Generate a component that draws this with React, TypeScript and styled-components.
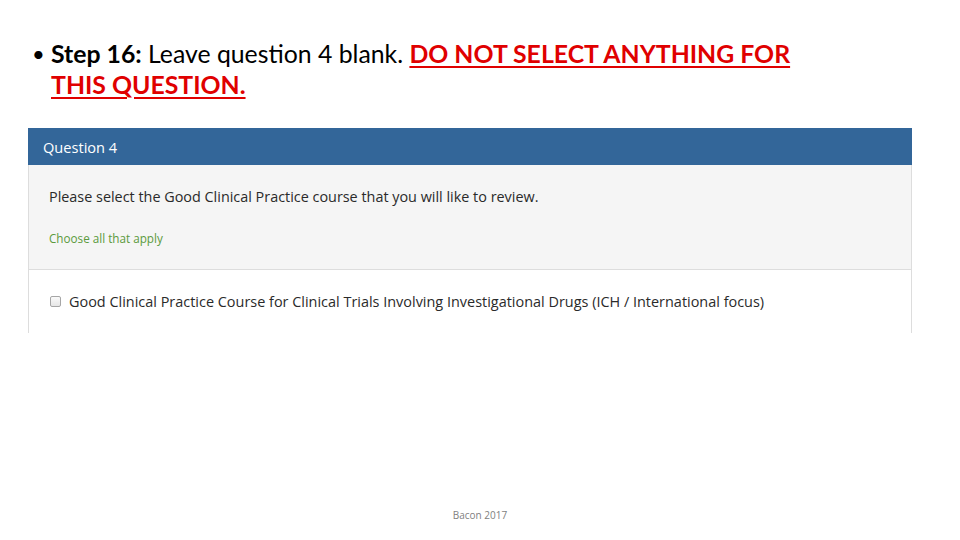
import React from "react";
import styled, { createGlobalStyle } from "styled-components";

const Global = createGlobalStyle`
  html, body { margin: 0; padding: 0; background: #ffffff; }
  body { width: 960px; height: 540px; overflow: hidden; }
`;

const Slide = styled.div`
  position: relative;
  width: 960px;
  height: 540px;
  background: #fff;
  display: flex;
  flex-direction: column;
`;

const Bullet = styled.div`
  display: flex;
  padding: 38px 0 0 32px;
  font-family: Lato, "Open Sans", sans-serif;
  font-size: 24.8px;
  line-height: 31px;
  color: #000;
`;

const Dot = styled.span`
  width: 19px;
  flex: none;
  font-size: 22px;
`;

const BulletText = styled.div`
  width: 840px;
`;

const Strong = styled.b`
  font-weight: 700;
`;

const Warn = styled.span`
  color: #e00000;
  font-weight: 700;
  text-decoration: underline;
  text-decoration-thickness: 2px;
  text-underline-offset: 3px;
`;

const Panel = styled.div`
  margin: 28px 0 0 28px;
  width: 884px;
  font-family: "Open Sans", sans-serif;
`;

const PanelHeader = styled.div`
  height: 37px;
  background: #336699;
  color: #fff;
  font-size: 14.6px;
  display: flex;
  align-items: center;
  padding-left: 15px;
`;

const PanelBody = styled.div`
  background: #f5f5f5;
  border-left: 1px solid #dddddd;
  border-right: 1px solid #dddddd;
  border-bottom: 1px solid #dddddd;
  height: 105px;
  padding: 22px 0 0 20px;
  box-sizing: border-box;
`;

const Prompt = styled.div`
  font-size: 14.4px;
  color: #2a2a2a;
  line-height: 20px;
`;

const Hint = styled.div`
  margin-top: 23px;
  font-size: 11.7px;
  color: #5b9a3c;
  line-height: 16px;
`;

const OptionRow = styled.div`
  height: 63px;
  border-left: 1px solid #dddddd;
  border-right: 1px solid #dddddd;
  display: flex;
  align-items: center;
  padding-left: 21px;
  box-sizing: border-box;
  gap: 8px;
  font-size: 14.45px;
  color: #2a2a2a;
`;

const Box = styled.span`
  width: 11px;
  height: 11px;
  border: 1px solid #a6a6a6;
  border-radius: 2px;
  background: linear-gradient(#fafafa, #e6e6e6);
  box-sizing: border-box;
  flex: none;
  margin-top: -1px;
`;

const Footer = styled.div`
  position: absolute;
  left: 0;
  right: 0;
  top: 508px;
  text-align: center;
  font-family: "Open Sans", sans-serif;
  font-size: 10px;
  color: #7f7f7f;
`;

export default function App() {
  return (
    <Slide>
      <Global />
      <Bullet>
        <Dot>•</Dot>
        <BulletText>
          <Strong>Step 16:</Strong> Leave question 4 blank.{" "}
          <Warn>
            DO NOT SELECT ANYTHING FOR
            <br />
            THIS QUESTION.
          </Warn>
        </BulletText>
      </Bullet>
      <Panel>
        <PanelHeader>Question 4</PanelHeader>
        <PanelBody>
          <Prompt>Please select the Good Clinical Practice course that you will like to review.</Prompt>
          <Hint>Choose all that apply</Hint>
        </PanelBody>
        <OptionRow>
          <Box />
          Good Clinical Practice Course for Clinical Trials Involving Investigational Drugs (ICH / International focus)
        </OptionRow>
      </Panel>
      <Footer>Bacon 2017</Footer>
    </Slide>
  );
}
